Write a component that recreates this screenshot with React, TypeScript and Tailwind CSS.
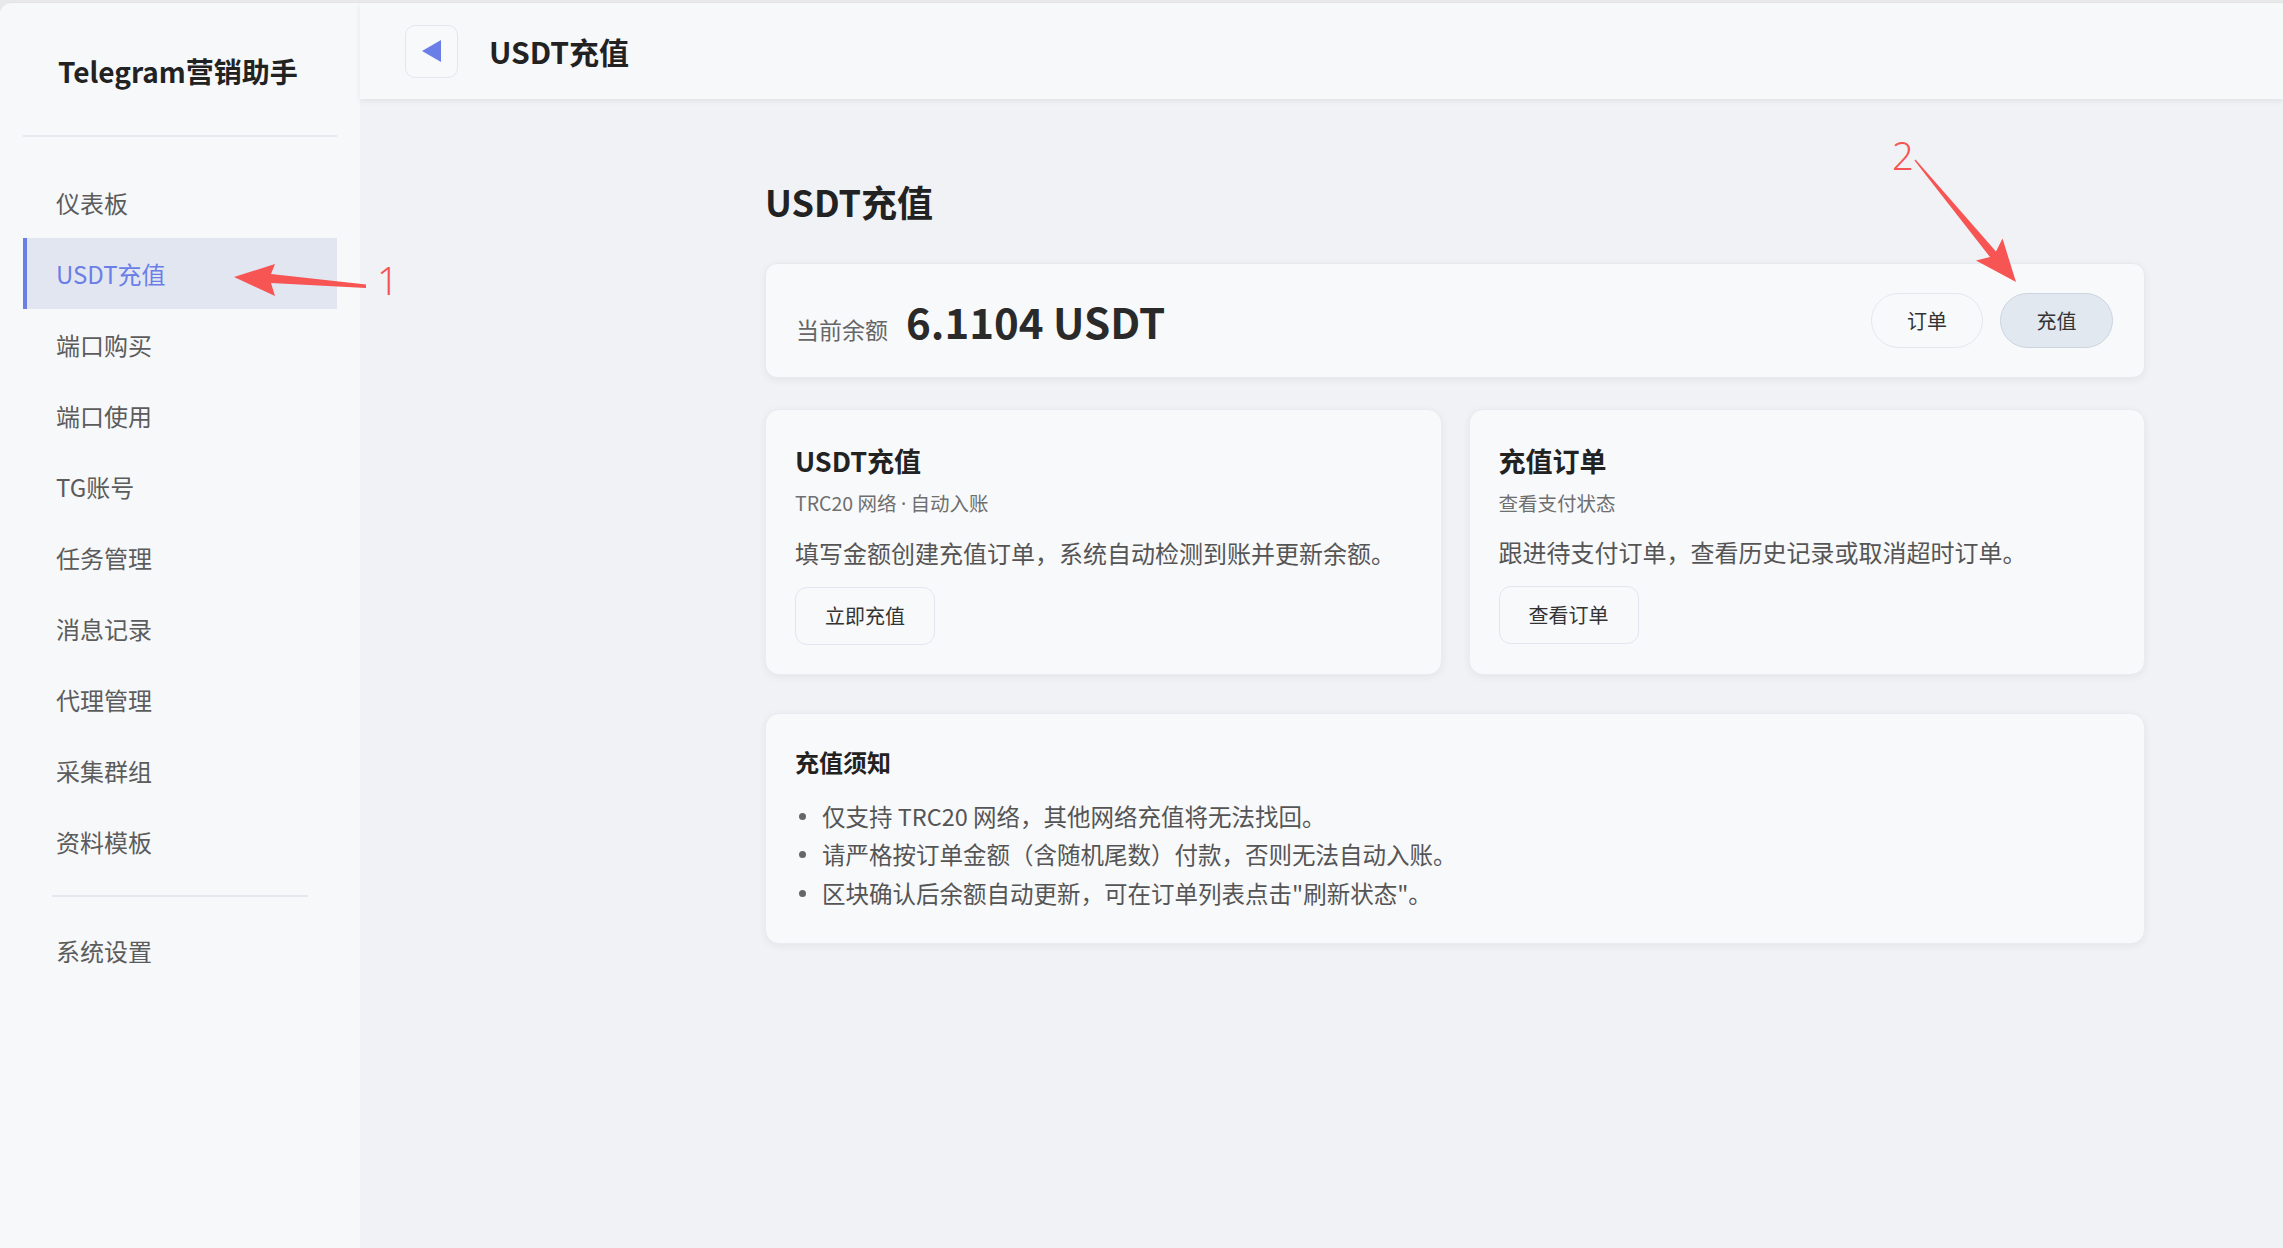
import React from "react";

const navItems = [
  "仪表板",
  "USDT充值",
  "端口购买",
  "端口使用",
  "TG账号",
  "任务管理",
  "消息记录",
  "代理管理",
  "采集群组",
  "资料模板",
];

const FONT = { fontFamily: '"Noto Sans CJK SC", "Noto Sans", sans-serif' };

function NavItem({ label, active }: { label: string; active?: boolean }) {
  return (
    <div
      className={
        "h-[71px] flex items-center pl-[29px] border-l-4 text-[24px] " +
        (active
          ? "bg-[#e2e6f0] border-[#6b7ee8] text-[#6b7ee8]"
          : "border-transparent text-[#5c5c5c]")
      }
    >
      {label}
    </div>
  );
}

function ActionCard({
  title,
  sub,
  desc,
  btn,
}: {
  title: string;
  sub: React.ReactNode;
  desc: string;
  btn: string;
}) {
  return (
    <div className="h-[266px] rounded-[14px] bg-[#f8f9fb] border border-[#e8ebf0] shadow-[0_2px_8px_rgba(0,0,0,0.06)] px-[29px] pt-[33px]">
      <div className="text-[27px] leading-[36px] font-bold text-[#222]">{title}</div>
      <div className="mt-[10px] text-[19.5px] leading-[28px] text-[#6f6f6f]">{sub}</div>
      <div className="mt-[18px] text-[24px] leading-[34px] text-[#555]">{desc}</div>
      <button className="mt-[17px] h-[58px] w-[140px] rounded-[12px] border border-[#e1e6ee] bg-[#f8f9fb] text-[20px] text-[#333]">
        {btn}
      </button>
    </div>
  );
}

export default function App() {
  return (
    <div className="relative w-[2283px] h-[1248px] bg-[#e9e9ea] pt-[2px] overflow-hidden" style={FONT}>
      <div className="flex h-full rounded-tl-[12px] overflow-hidden border-t border-[#e4e4e6]">
        {/* Sidebar */}
        <aside className="w-[360px] shrink-0 bg-[#f7f8fa] px-[23px]">
          <div className="h-[134px] flex items-center pl-[35px] pt-[4px] border-b-2 border-[#e6e9ef]">
            <span className="text-[28px] font-bold text-[#222]">Telegram营销助手</span>
          </div>
          <nav className="mt-[30px]">
            {navItems.map((n) => (
              <NavItem key={n} label={n} active={n === "USDT充值"} />
            ))}
            <div className="mx-[29px] my-[18px] h-[2px] bg-[#e3e7ee]" />
            <NavItem label="系统设置" />
          </nav>
        </aside>

        {/* Right column */}
        <div className="flex-1 flex flex-col bg-[#f0f2f5]">
          <header className="h-[96px] shrink-0 flex items-center bg-[#f7f8fa] pl-[45px] shadow-[0_2px_6px_rgba(0,0,0,0.07)] relative z-10">
            <button className="w-[53px] h-[53px] rounded-[10px] border border-[#e3e6ee] bg-[#f8f9fb] flex items-center justify-center">
              <svg width="20" height="22" viewBox="0 0 20 22">
                <polygon points="0,11 19,0 19,22" fill="#6b7ee8" />
              </svg>
            </button>
            <h1 className="ml-[31px] text-[30px] font-bold text-[#222]">USDT充值</h1>
          </header>

          <main className="flex-1 pt-[77px] pl-[405px]">
            <div className="w-[1380px]">
              <h2 className="text-[36px] leading-[50px] font-bold text-[#222] mb-[37px]">USDT充值</h2>

              <div className="h-[115px] rounded-[12px] bg-[#f8f9fb] border border-[#e6e9ef] shadow-[0_2px_8px_rgba(0,0,0,0.06)] pl-[30px] pr-[31px] flex items-center justify-between">
                <div className="flex items-baseline gap-[18px]">
                  <span className="text-[23px] text-[#666]">当前余额</span>
                  <span className="text-[42px] font-bold text-[#2a2a2a]">6.1104 USDT</span>
                </div>
                <div className="flex items-center gap-[17px]">
                  <button className="h-[55px] w-[112px] rounded-full border border-[#e3e7ee] bg-[#f8f9fb] text-[20px] text-[#333]">
                    订单
                  </button>
                  <button className="h-[55px] w-[113px] rounded-full border border-[#ccd4e0] bg-[#e2e8f0] text-[20px] text-[#333]">
                    充值
                  </button>
                </div>
              </div>

              <div className="mt-[31px] grid grid-cols-2 gap-[27px]">
                <ActionCard
                  title="USDT充值"
                  sub={
                    <>
                      TRC20 网络{" "}
                      <span style={{ fontFamily: '"Noto Sans", sans-serif' }}>·</span> 自动入账
                    </>
                  }
                  desc="填写金额创建充值订单，系统自动检测到账并更新余额。"
                  btn="立即充值"
                />
                <ActionCard
                  title="充值订单"
                  sub="查看支付状态"
                  desc="跟进待支付订单，查看历史记录或取消超时订单。"
                  btn="查看订单"
                />
              </div>

              <div className="mt-[38px] rounded-[14px] bg-[#f8f9fb] border border-[#e8ebf0] shadow-[0_2px_8px_rgba(0,0,0,0.06)] px-[29px] pt-[31px] pb-[30px]">
                <div className="text-[24px] leading-[34px] font-bold text-[#222]">充值须知</div>
                <ul className="mt-[18px]">
                  {[
                    "仅支持 TRC20 网络，其他网络充值将无法找回。",
                    "请严格按订单金额（含随机尾数）付款，否则无法自动入账。",
                    "区块确认后余额自动更新，可在订单列表点击\"刷新状态\"。",
                  ].map((t) => (
                    <li key={t} className="flex items-center gap-[16px] h-[38.5px] text-[23.5px] text-[#555]">
                      <span className="ml-[4px] w-[7px] h-[7px] rounded-full bg-[#666] shrink-0" />
                      <span>{t}</span>
                    </li>
                  ))}
                </ul>
              </div>
            </div>
          </main>
        </div>
      </div>

      {/* Annotation overlay */}
      <svg className="absolute left-0 top-0 pointer-events-none" width="2283" height="1248" viewBox="0 0 2283 1248">
        <polygon
          points="234,277 275,264 271,274 366,284.5 366,288 271,283 275,296"
          fill="#f75454"
        />
        <polygon
          points="2016,282 1976,260.5 1990,257 1914.5,160.5 1915.5,159.5 1996,251.5 2002.5,238.5"
          fill="#f75454"
        />
      </svg>
      <div
        className="absolute left-[377px] top-[261px] text-[38px] leading-[38px] font-light text-[#f75454] pointer-events-none"
        style={{ fontFamily: '"Noto Sans", sans-serif' }}
      >
        1
      </div>
      <div
        className="absolute left-[1892px] top-[136px] text-[38px] leading-[38px] font-light text-[#f75454] pointer-events-none"
        style={{ fontFamily: '"Noto Sans", sans-serif' }}
      >
        2
      </div>
    </div>
  );
}
